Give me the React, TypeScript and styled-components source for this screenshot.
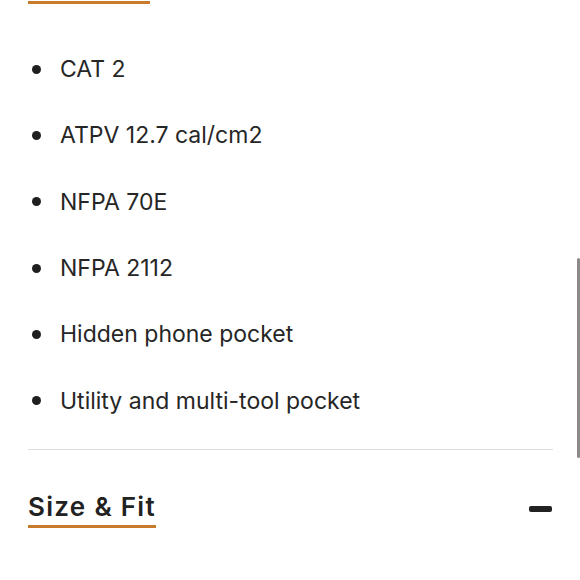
import styled, { createGlobalStyle } from 'styled-components';

const GlobalStyle = createGlobalStyle`
  html, body {
    margin: 0;
    padding: 0;
    background: #ffffff;
    overflow: hidden;
  }
  body {
    font-family: Inter, "Noto Sans", sans-serif;
    color: #262626;
  }
`;

const Page = styled.div`
  width: 580px;
  height: 580px;
  padding: 0 27px 0 28px;
  box-sizing: border-box;
  position: relative;
`;

const TopRule = styled.div`
  width: 122px;
  height: 3px;
  margin-top: 1px;
  background: #c87b2c;
`;

const List = styled.ul`
  list-style: none;
  margin: 32px 0 0;
  padding: 0;
`;

const Item = styled.li`
  height: 66.3px;
  display: flex;
  align-items: center;
  font-size: 23px;
  font-weight: 400;
  color: #262626;

  &::before {
    content: '';
    width: 9px;
    height: 9px;
    border-radius: 50%;
    background: #1f1f1f;
    margin: 0 19px 0 4px;
    flex-shrink: 0;
  }
`;

const Divider = styled.hr`
  border: none;
  height: 1px;
  background: #dedede;
  margin: 15px 0 0;
`;

const SectionHeader = styled.div`
  display: flex;
  align-items: center;
  justify-content: space-between;
  margin-top: 42px;
`;

const SectionTitle = styled.h2`
  margin: 0;
  display: inline-block;
  font-size: 26px;
  font-weight: 600;
  letter-spacing: 1.3px;
  color: #222;
  line-height: 30px;
  padding-bottom: 3px;
  border-bottom: 3px solid #c87b2c;
`;

const Minus = styled.span`
  width: 23px;
  height: 6px;
  border-radius: 2px;
  background: #222;
  margin: 0 1px 2px 0;
`;

const Scrollbar = styled.div`
  position: absolute;
  right: 0;
  top: 257px;
  width: 3px;
  height: 200px;
  border-radius: 2px;
  background: #8a8a8a;
`;

const features = [
  'CAT 2',
  'ATPV 12.7 cal/cm2',
  'NFPA 70E',
  'NFPA 2112',
  'Hidden phone pocket',
  'Utility and multi-tool pocket',
];

export default function App() {
  return (
    <>
      <GlobalStyle />
      <Page>
        <TopRule />
        <List>
          {features.map((f) => (
            <Item key={f}>{f}</Item>
          ))}
        </List>
        <Divider />
        <SectionHeader>
          <SectionTitle>Size &amp; Fit</SectionTitle>
          <Minus />
        </SectionHeader>
        <Scrollbar />
      </Page>
    </>
  );
}
